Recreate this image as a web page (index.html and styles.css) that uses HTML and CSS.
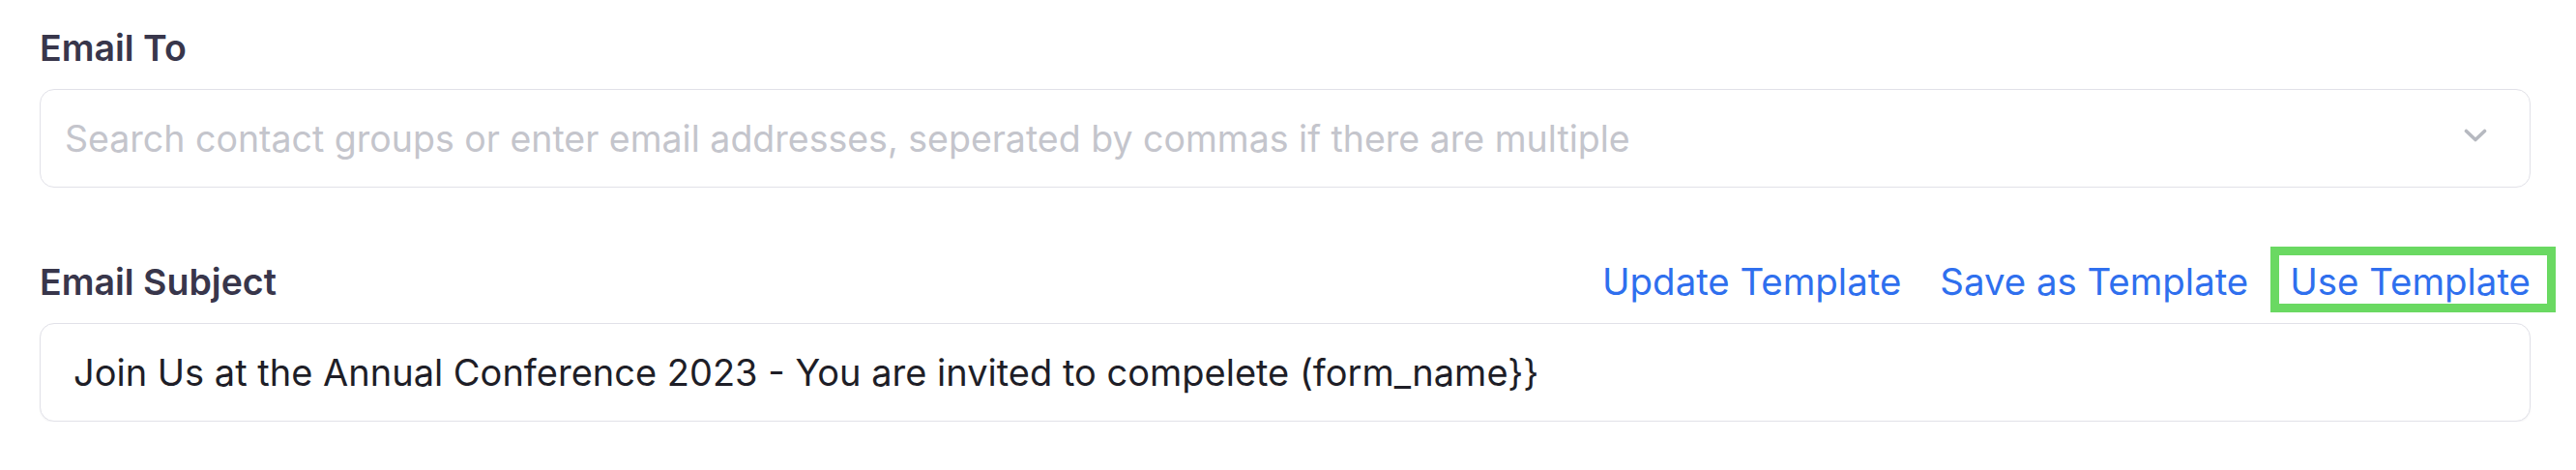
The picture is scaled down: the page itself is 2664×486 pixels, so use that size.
FILE: index.html
```html
<!DOCTYPE html>
<html lang="en">
<head>
<meta charset="utf-8">
<title>Email form</title>
<link rel="stylesheet" href="styles.css">
</head>
<body>
<div class="form">
  <div class="field">
    <div class="label-row">
      <label class="label">Email To</label>
    </div>
    <div class="box select">
      <span class="placeholder">Search contact groups or enter email addresses, seperated by commas if there are multiple</span>
      <svg class="chevron" width="24" height="15" viewBox="0 0 24 15" aria-hidden="true">
        <polyline points="2.5,2.5 12,11.5 21.5,2.5" fill="none" stroke="#b6b9c0" stroke-width="3.6" stroke-linecap="round" stroke-linejoin="round"/>
      </svg>
    </div>
  </div>
  <div class="field field-subject">
    <div class="label-row">
      <label class="label">Email Subject</label>
      <div class="links">
        <a class="link link-update">Update Template</a>
        <a class="link link-save">Save as Template</a>
        <a class="link link-use">Use Template</a>
      </div>
    </div>
    <div class="box subject">
      <span class="value">Join Us at the Annual Conference 2023 - You are invited to compelete (form_name}}</span>
    </div>
  </div>
</div>
</body>
</html>
```

FILE: styles.css
```css
html, body {
  margin: 0;
  padding: 0;
  background: #ffffff;
}

body {
  font-family: Inter, "Noto Sans", sans-serif;
}

.form {
  padding: 30px 47px 0 41px;
}

.label-row {
  display: flex;
  align-items: baseline;
  justify-content: space-between;
}

.label {
  font-size: 37.5px;
  font-weight: 600;
  line-height: 40px;
  color: #38364b;
}

.field-subject {
  margin-top: 70px;
}

.field-subject .label {
  line-height: 46px;
}

.box {
  margin-top: 22px;
  height: 102px;
  box-sizing: border-box;
  border: 1.5px solid #e1e1e8;
  border-radius: 15px;
  display: flex;
  align-items: center;
  background: #fff;
}

.select {
  padding: 0 44px 0 25px;
  justify-content: space-between;
}

.placeholder {
  font-size: 37.5px;
  color: #c4c5cc;
  white-space: nowrap;
}

.chevron {
  display: block;
  margin-top: -6px;
}

.subject {
  margin-top: 19px;
  padding: 0 34px;
  box-shadow: 0 1px 2px rgba(16, 24, 40, 0.05);
}

.value {
  font-size: 38px;
  color: #1e1e27;
  white-space: nowrap;
}

.links {
  display: flex;
  align-items: baseline;
}

.link {
  font-size: 38.4px;
  line-height: 46px;
  padding-top: 4px;
  color: #2f6fee;
  white-space: nowrap;
  cursor: pointer;
}

.link-save {
  margin-left: 40px;
}

.link-use {
  margin-left: 32px;
  margin-right: -17px;
  padding: 4px 17px 0 11px;
  outline: 9px solid #6ad962;
}
```
